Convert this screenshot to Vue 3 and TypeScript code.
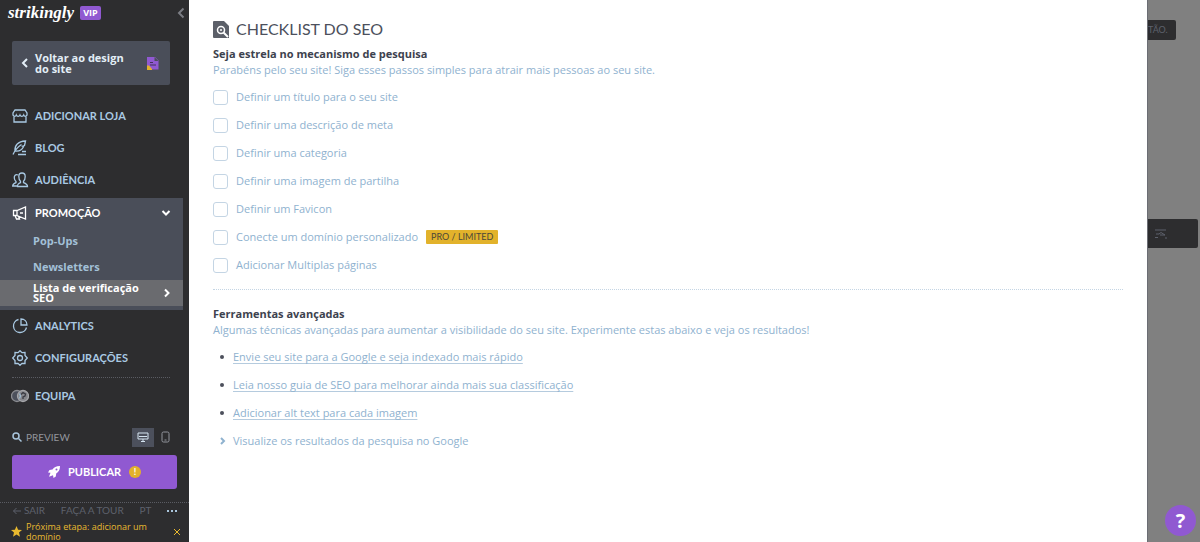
<script setup lang="ts">
import { ref } from 'vue'

interface CheckItem { id: string; label: string; badge?: string }

const checks: CheckItem[] = [
  { id: 'title', label: 'Definir um título para o seu site' },
  { id: 'meta', label: 'Definir uma descrição de meta' },
  { id: 'category', label: 'Definir uma categoria' },
  { id: 'share', label: 'Definir uma imagem de partilha' },
  { id: 'favicon', label: 'Definir um Favicon' },
  { id: 'domain', label: 'Conecte um domínio personalizado', badge: 'PRO / LIMITED' },
  { id: 'pages', label: 'Adicionar Multiplas páginas' },
]
const done = ref<string[]>([])

const links: string[] = [
  'Envie seu site para a Google e seja indexado mais rápido',
  'Leia nosso guia de SEO para melhorar ainda mais sua classificação',
  'Adicionar alt text para cada imagem',
]
</script>

<template>
  <div class="app">
    <aside class="sidebar">
      <header class="brand">
        <span class="logo">strikingly</span>
        <span class="vip">VIP</span>
        <button class="collapse" type="button" aria-label="Recolher menu">
          <svg width="8" height="12" viewBox="0 0 8 12"><path d="M6.500 1.500 2 6l4.500 4.500" /></svg>
        </button>
      </header>

      <button class="back" type="button">
        <svg class="chev" width="8" height="12" viewBox="0 0 8 12"><path d="M6 2 2 6l4 4" /></svg>
        <span class="back-text">Voltar ao design do site</span>
        <svg class="doc" width="12" height="13" viewBox="0 0 12 13">
          <path d="M0 0h8l3.500 3.500V12.500H0z" fill="#9059d1" />
          <path d="M7.500 0v4h4z" fill="#4a4e59" />
          <path d="M0 8.500h2L5 12v1H0z" fill="#e2b22b" />
          <path d="M3 5h3v1H3zM3 7.500h6v1H3z" fill="#41335c" />
        </svg>
      </button>

      <nav class="nav" aria-label="Principal">
        <a class="item" href="#loja">
          <svg width="16" height="16" viewBox="0 0 16 16"><path d="M3 2h10l2 3v2c-.5 1.700-2.700 1.700-3.300 0-.8 1.700-3 1.700-3.700 0-.7 1.700-3 1.700-3.700 0C3.700 8.700 1.500 8.700 1 7V5zM2 8v6h12V8" /></svg>
          ADICIONAR LOJA
        </a>
        <a class="item" href="#blog">
          <svg width="16" height="16" viewBox="0 0 16 16"><path d="M1 14.500C3 10 5 7.500 9.500 4.500M3 11C2.500 5 6 1.500 13.500 1c-.5 2-.5 3-1 4.500l-2 .7 1 .6C10 10 7 11.500 3 11M10 11.500h4M6 14.500h8" /></svg>
          BLOG
        </a>
        <a class="item" href="#audiencia">
          <svg width="16" height="16" viewBox="0 0 16 16"><path d="M5.500 14.500h10c0-2.300-1.200-2.800-4-3.800V9.200C13 8 13.200 6.500 13.200 4.500 13.200 2.300 12 1 10 1S6.800 2.300 6.800 4.500c0 2 .2 3.500 1.700 4.700v1.500c-2.500 1-3 1.500-3 3.800zM6 3C3.500 2 2 3.500 2.300 6c.1 1.600.5 2.500 1.700 3.500v1.200C2 11.500.7 12 .7 14H5" /></svg>
          AUDIÊNCIA
        </a>

        <div class="group">
          <button class="item open" type="button" aria-expanded="true">
            <svg width="16" height="16" viewBox="0 0 16 16"><path d="M1.500 5.500v5h3l9 3.500V2L5 5.500zM5 5.500v5M3 10.500 4.500 14h3l-1-2.700M8 8h3" /></svg>
            PROMOÇÃO
            <svg class="end" width="10" height="8" viewBox="0 0 10 8"><path d="m1.500 2 3.500 3.500L8.500 2" /></svg>
          </button>
          <a class="sub" href="#popups">Pop-Ups</a>
          <a class="sub" href="#newsletters">Newsletters</a>
          <a class="sub active" href="#seo" aria-current="page">
            <span>Lista de verificação SEO</span>
            <svg class="end" width="8" height="10" viewBox="0 0 8 10"><path d="m2 1.500 3.500 3.500L2 8.500" /></svg>
          </a>
        </div>

        <a class="item" href="#analytics">
          <svg width="16" height="16" viewBox="0 0 16 16"><path d="M6.500 1.500a6.600 6.600 0 1 0 8 8M9 1v6h6C15 3.500 12.500 1 9 1z" /></svg>
          ANALYTICS
        </a>
        <a class="item" href="#config">
          <svg width="16" height="16" viewBox="0 0 16 16"><path d="m8 .7 2 2 3-.2v3l2.300 2.500-2.300 2.500v3l-3-.2-2 2-2-2-3 .2v-3L.7 8 3 5.500v-3l3 .2z" /><circle cx="8" cy="8" r="2.500" /></svg>
          CONFIGURAÇÕES
        </a>
        <hr class="rule inset" />
        <a class="item" href="#equipa">
          <svg width="18" height="14" viewBox="0 0 18 14">
            <circle cx="6" cy="7" r="5.500" fill="#4c505c" stroke="#8a8b90" />
            <circle cx="12" cy="7" r="5.500" fill="#85868b" stroke="#a5a6aa" />
            <path d="M10 5.500 12 3.500l2.500 1.500-.5 2-2 1v2" stroke="#3a3b43" />
            <path d="M8.500 4.500 9.500 7l-1 2.500" stroke="#9dbbd3" />
          </svg>
          EQUIPA
        </a>
      </nav>

      <div class="preview">
        <svg class="lens" width="10" height="10" viewBox="0 0 10 10"><circle cx="4" cy="4" r="3" /><path d="m6.500 6.500 3 3" /></svg>
        <span>PREVIEW</span>
        <button class="device on" type="button" aria-label="Computador">
          <svg width="12" height="11" viewBox="0 0 12 11"><path d="M1 1h10v6H1zM2 4.500h8M4 9.500h4M6 7v2.500" /></svg>
        </button>
        <button class="device" type="button" aria-label="Celular">
          <svg width="9" height="12" viewBox="0 0 9 12"><rect x="1" y="1" width="7" height="10" rx="1.500" /><path d="M3.500 9h2" /></svg>
        </button>
      </div>

      <button class="publish" type="button">
        <svg width="12" height="12" viewBox="0 0 12 12"><path d="M12 0C8 0 6 1.500 4.500 3.500L1.500 4 0 6.500l2.500.3L1 10.800l4-1.500.5 2.700 2.300-1.500.4-3C10.500 6 12 4 12 0z" fill="#fff" /><circle cx="8.500" cy="3.500" r="1" fill="#9059d1" /></svg>
        PUBLICAR
        <span class="alert">!</span>
      </button>

      <hr class="rule" />
      <footer class="foot">
        <a href="#sair"><svg width="9" height="8" viewBox="0 0 9 8"><path d="M9 4H1.500M4.500 1l-3 3 3 3" /></svg>SAIR</a>
        <a href="#tour">FAÇA A TOUR</a>
        <a href="#pt">PT</a>
        <button class="dots" type="button" aria-label="Mais"><i></i><i></i><i></i></button>
      </footer>
      <div class="next">
        <svg width="11" height="11" viewBox="0 0 11 11"><path d="m5.500 0 1.600 3.700 3.900.3-3 2.600 1 4.100-3.500-2.200L2 10.700l1-4.100L0 4l3.900-.3z" fill="#e9b92f" stroke="none" /></svg>
        <span>Próxima etapa: adicionar um domínio</span>
        <button type="button" aria-label="Fechar">
          <svg width="8" height="8" viewBox="0 0 8 8"><path d="m1 1 6 6M7 1 1 7" /></svg>
        </button>
      </div>
    </aside>

    <main class="panel">
      <h1 class="title">
        <svg width="16" height="17" viewBox="0 0 16 17">
          <path d="M1 0h10l5 5v12H1a1 1 0 0 1-1-1V1a1 1 0 0 1 1-1z" fill="#5c6069" />
          <circle cx="8" cy="9" r="3.500" fill="#5c6069" stroke="#fff" stroke-width="1.500" />
          <path d="m10.500 11.500 4.500 4.500" stroke="#fff" stroke-width="2" /><circle cx="8" cy="9" r="1" fill="#fff" />
        </svg>
        CHECKLIST DO SEO
      </h1>

      <section class="checks">
        <h2>Seja estrela no mecanismo de pesquisa</h2>
        <p>Parabéns pelo seu site! Siga esses passos simples para atrair mais pessoas ao seu site.</p>
        <ul class="check-list">
          <li v-for="c in checks" :key="c.id">
            <input :id="c.id" v-model="done" type="checkbox" :value="c.id" />
            <label :for="c.id">{{ c.label }}</label>
            <span v-if="c.badge" class="badge">{{ c.badge }}</span>
          </li>
        </ul>
      </section>

      <section class="tools">
        <h2>Ferramentas avançadas</h2>
        <p>Algumas técnicas avançadas para aumentar a visibilidade do seu site. Experimente estas abaixo e veja os resultados!</p>
        <ul class="tool-list">
          <li v-for="l in links" :key="l"><span class="bullet"></span><a href="#ajuda">{{ l }}</a></li>
          <li>
            <svg class="arrow" width="6" height="8" viewBox="0 0 6 8"><path d="m1 1 3 3-3 3" /></svg>
            <button type="button" class="reveal">Visualize os resultados da pesquisa no Google</button>
          </li>
        </ul>
      </section>
    </main>

    <div class="backdrop">
      <div class="chip short">TÃO.</div>
      <div class="chip tall">
        <svg width="14" height="10" viewBox="0 0 14 10"><path d="M2 1h11M2 8.500h3M3 5h3l2-1.500L12 6H7M12 9h2" /></svg>
      </div>
      <button class="help" type="button" aria-label="Ajuda">?</button>
    </div>
  </div>
</template>

<style>
body { margin: 0; }
</style>

<style scoped>
* { box-sizing: border-box; }
.app { display: flex; min-height: 100vh; background: #fff; font-family: "Open Sans", sans-serif; font-size: 11px; line-height: 16px; }
button { font: inherit; color: inherit; background: none; border: 0; padding: 0; cursor: pointer; }
a { color: inherit; text-decoration: none; }
svg { flex: none; fill: none; stroke: currentColor; }
h1, h2, p, ul { margin: 0; padding: 0; }
ul { list-style: none; }

.sidebar { flex: none; width: 189px; background: #2d2d2f; color: #a9c9e3; display: flex; flex-direction: column; }
.brand { display: flex; align-items: center; height: 25px; padding: 0 4px 0 8px; color: #fff; }
.logo { font-family: "Liberation Serif", serif; font-style: italic; font-weight: 700; font-size: 17px; }
.vip { margin-left: 6px; padding: 0 3px; border-radius: 2px; background: #9059d1; font-size: 9px; line-height: 14px; font-weight: 700; }
.collapse { margin-left: auto; color: #7b7d84; display: flex; }
.collapse svg { stroke-width: 2; }

.back { display: flex; align-items: center; margin: 16px 19px 15px 12px; height: 44px; padding: 0 11px 0 9px; background: #4a4e59; border-radius: 2px; color: #e3eef7; text-align: left; }
.back-text { flex: 1; margin: 0 14px 0 6px; font-size: 11px; line-height: 11px; font-weight: 700; }
.chev { stroke-width: 2; }
.doc { stroke: none; }

.nav { font-family: Lato, sans-serif; font-size: 11px; font-weight: 700; }
.item { display: flex; align-items: center; width: 100%; height: 32px; padding: 0 12px 0 11px; gap: 6px; }
.item > svg:first-child { width: 18px; stroke-width: 1.300; }
.group { margin: 2px 6px 0 0; background: #4a4e59; padding-bottom: 4px; }
.open { height: 30px; color: #fff; }
.end { margin-left: auto; }
.open .end, .active .end { stroke-width: 2; }
.sub { display: flex; align-items: center; height: 26px; padding: 0 12px 0 33px; font-family: "Open Sans", sans-serif; font-size: 11px; color: #a3c0d7; }
.sub span { margin-right: 12px; }
.active { background: #6a6b6f; color: #fff; line-height: 10px; }
.rule { width: auto; height: 0; margin: 0; border: 0; border-top: 1px dotted #5a5c63; }
.inset { margin: 3px 19px 2px 12px; }

.preview { display: flex; align-items: center; height: 20px; margin: 15px 13px 8px 12px; font-family: Lato, sans-serif; font-size: 10px; color: #93969d; }
.preview span { margin: 0 auto 0 4px; }
.lens { color: #a9c5dc; stroke-width: 1.500; }
.device { display: flex; align-items: center; justify-content: center; width: 22px; height: 19px; }
.on { background: #4c505c; color: #d5e4f0; }

.publish { display: flex; align-items: center; justify-content: center; gap: 8px; height: 34px; margin: 0 12px 13px; border-radius: 3px; background: #9059d1; color: #fff; font-family: Lato, sans-serif; font-size: 11px; font-weight: 700; }
.publish svg { stroke: none; }
.alert { display: flex; align-items: center; justify-content: center; width: 12px; height: 12px; border-radius: 50%; background: #e2b22b; font-size: 9px; line-height: 12px; }
.foot { display: flex; align-items: center; justify-content: space-between; height: 15px; padding: 0 12px; font-family: Lato, sans-serif; font-size: 10px; line-height: 15px; color: #5d616c; }
.foot a { display: flex; align-items: center; gap: 3px; }
.dots { display: flex; gap: 2px; }
.dots i { width: 2px; height: 2px; background: #a9c5dc; }
.next { display: flex; align-items: center; gap: 4px; height: 24px; padding: 3px 8px 0 11px; color: #e9b92f; font-size: 9px; line-height: 10px; }
.next span { flex: 1; }
.next button { display: flex; }

.panel { flex: 1; min-width: 0; padding: 20px 24px 24px; color: #8fb2cf; }
.title { display: flex; align-items: center; gap: 7px; height: 18px; margin-bottom: 8px; color: #4c505c; font-family: Lato, sans-serif; font-size: 16px; font-weight: 400; }
.title svg { stroke: none; }
h2 { font-size: 11px; line-height: 16px; color: #3d424e; font-weight: 700; }
.check-list { padding: 5px 0 10px; border-bottom: 1px dotted #c4d5e4; }
.check-list li { display: flex; align-items: center; height: 28px; }
.check-list input { appearance: none; width: 15px; height: 15px; margin: 0 8px 0 0; border: 1px solid #c4d5e4; border-radius: 3px; background: #fff; }
.check-list input:checked { background: #93b4d0; }
.badge { margin-left: 8px; padding: 0 5px; border-radius: 1px; background: #e2b22b; color: #4c4838; font-family: Lato, sans-serif; font-size: 9px; line-height: 14px; }
.tools { padding-top: 16px; }
.tool-list { padding-top: 5px; }
.tool-list li { display: flex; align-items: center; height: 28px; padding-left: 7px; }
.tool-list a { text-decoration: underline; text-decoration-color: #b5cbde; text-underline-offset: 2px; text-decoration-skip-ink: none; }
.bullet { width: 4px; height: 4px; margin-right: 9px; border-radius: 50%; background: #4c505c; }
.arrow { margin-right: 7px; stroke-width: 2; }

.backdrop { flex: none; display: flex; flex-direction: column; width: 53px; background: #808080; border-left: 1px solid #6b6d74; }
.chip { background: #2d2d2f; color: #5d616c; border-radius: 0 2px 2px 0; display: flex; align-items: center; }
.short { width: 28px; height: 20px; margin-top: 20px; font-family: Lato, sans-serif; font-size: 9px; }
.tall { width: 50px; height: 29px; margin-top: 179px; padding-left: 5px; }
.help { margin: auto 4px 6px auto; width: 31px; height: 31px; border-radius: 50%; background: #9059d1; color: #fff; font-size: 20px; line-height: 31px; font-weight: 700; }
</style>
